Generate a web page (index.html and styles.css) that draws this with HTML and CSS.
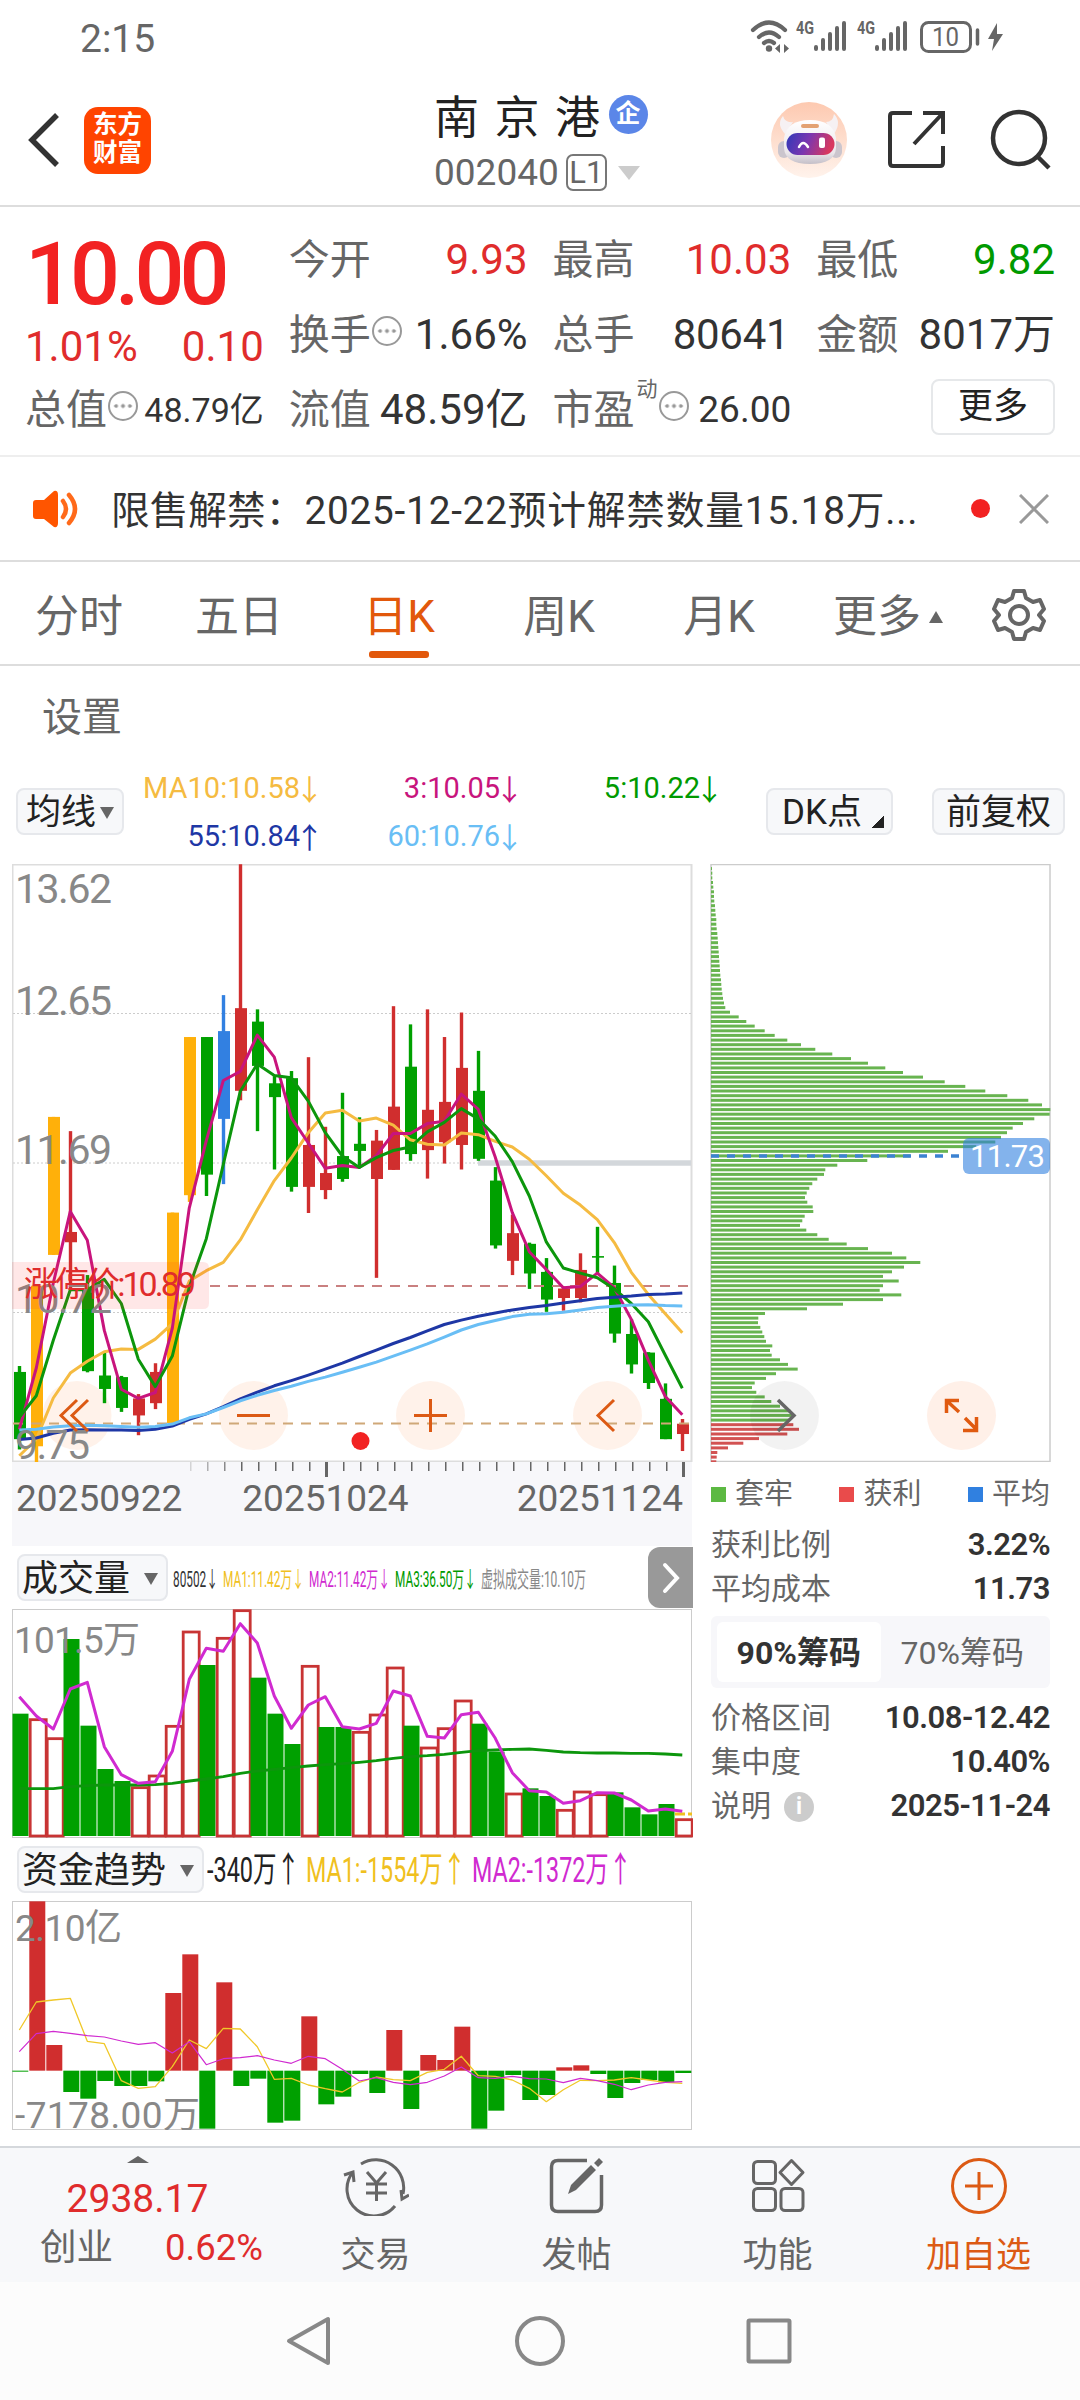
FILE: index.html
```html
<!DOCTYPE html>
<html lang="zh-CN">
<head>
  <meta charset="utf-8">
  <title>南京港 002040</title>
  <link rel="stylesheet" href="styles.css">
</head>
<body>
  <div class="statusbar">
    <span class="clock">2:15</span>
    <svg class="status-icons" width="260" height="40" viewBox="748 16 260 40">
      <g fill="none" stroke="#666" stroke-width="4.2" stroke-linecap="round">
        <path d="M753 30 Q769 15 785 30"/>
        <path d="M759 37 Q769 28 779 37"/>
        <path d="M764 43 Q769 39 774 43"/>
      </g>
      <circle cx="769" cy="48.500" r="3.200" fill="#666"/>
      <path d="M780 44v9l-5-4.500zM784 44v9l5-4.500z" fill="#666"/>
      <text class="net" x="796" y="34" textLength="18" lengthAdjust="spacingAndGlyphs">4G</text>
      <text class="net" x="857" y="34" textLength="18" lengthAdjust="spacingAndGlyphs">4G</text>
      <g stroke="#666" stroke-width="4" stroke-linecap="round">
        <path d="M816 47v2M823 40v9M830 34v15M837 28v21M844 23v26"/>
        <path d="M877 47v2M884 40v9M891 34v15M898 28v21M905 23v26"/>
      </g>
      <rect x="921.500" y="22.500" width="49" height="29" rx="7" fill="none" stroke="#666" stroke-width="3"/>
      <text class="batt" x="932" y="46" textLength="27" lengthAdjust="spacingAndGlyphs">10</text>
      <path d="M977.500 30v14" stroke="#666" stroke-width="3.500" stroke-linecap="round"/>
      <path d="M997 23l-9 16h6l-2 12 11-17h-6z" fill="#666"/>
    </svg>
  </div>

  <div class="header">
    <svg width="34" height="58" viewBox="0 0 34 58"><path d="M31 4L6 29L31 54" fill="none" stroke="#333" stroke-width="5.500"/></svg>
    <div class="logo">东方<br>财富</div>
    <div class="stock">
      <div class="stock-name">南京港<span class="corp">企</span></div>
      <div class="stock-code">002040<span class="level">L1</span><i class="tri-down"></i></div>
    </div>
    <svg class="bot" width="76" height="76" viewBox="0 0 76 76">
      <defs>
        <linearGradient id="peach" x1="0" y1="0" x2="0" y2="1"><stop offset="0" stop-color="#fdc9b0"/><stop offset="1" stop-color="#fff3ec"/></linearGradient>
        <linearGradient id="visor" x1="0" y1="0" x2="1" y2=".2"><stop offset="0" stop-color="#2f39b8"/><stop offset=".5" stop-color="#7b37b0"/><stop offset="1" stop-color="#d8385f"/></linearGradient>
        <linearGradient id="shell" x1="0" y1="0" x2="0" y2="1"><stop offset="0" stop-color="#fff"/><stop offset=".75" stop-color="#ebe6ea"/><stop offset="1" stop-color="#c4bfc8"/></linearGradient>
      </defs>
      <circle cx="38" cy="38" r="38" fill="url(#peach)"/>
      <path d="M22 20Q14 21 12 14Q5 22 14 32ZM55 20Q62 20 63 12Q71 20 63 32Z" fill="#f6f1f3"/>
      <rect x="7" y="39" width="12" height="17" rx="6" fill="#cbc5cd"/>
      <rect x="59" y="39" width="12" height="17" rx="6" fill="#cbc5cd"/>
      <path d="M13 36Q16 18 39 18T65 36V46Q64 62 39 62T13 46Z" fill="url(#shell)"/>
      <rect x="15.500" y="31" width="48" height="22" rx="11" fill="url(#visor)"/>
      <path d="M28 45Q32 37 37 45" fill="none" stroke="#fff" stroke-width="2.500" stroke-linecap="round"/>
      <rect x="48" y="35.500" width="6" height="10.500" rx="2" fill="#fff"/>
      <rect x="30" y="22" width="18" height="4" rx="2" fill="#e3a273"/>
    </svg>
    <svg class="share" width="60" height="60" viewBox="0 0 60 60" fill="none" stroke="#333" stroke-width="4">
      <path d="M25 3H6Q3 3 3 6V53Q3 56 6 56H53Q56 56 56 53V36"/><path d="M36 3H56V24M56 3L27 34"/>
    </svg>
    <svg width="62" height="62" viewBox="0 0 62 62" fill="none" stroke="#333" stroke-width="4.500"><circle cx="29" cy="29" r="26"/><path d="M47 47L59 59"/></svg>
  </div>

  <div class="quote">
    <div class="price-box">
      <div class="price">10.00</div>
      <div class="change"><span>1.01%</span><span>0.10</span></div>
    </div>
    <div class="cell"><label>今开</label><b class="red">9.93</b></div>
    <div class="cell"><label>最高</label><b class="red">10.03</b></div>
    <div class="cell"><label>最低</label><b class="green">9.82</b></div>
    <div class="cell"><label>换手<i class="more-dot"></i></label><b>1.66%</b></div>
    <div class="cell"><label>总手</label><b class="pad">80641</b></div>
    <div class="cell"><label>金额</label><b>8017万</b></div>
    <div class="cell"><label>总值<i class="more-dot"></i></label><b class="small">48.79亿</b></div>
    <div class="cell"><label>流值</label><b>48.59亿</b></div>
    <div class="cell"><label>市盈<sup>动</sup><i class="more-dot"></i></label><b class="mid">26.00</b></div>
    <div class="cell end"><button class="more-btn">更多</button></div>
  </div>

  <div class="notice">
    <svg width="46" height="38" viewBox="0 0 46 38">
      <path d="M3 10H11L21 1Q25 0 25 5V33Q25 38 21 37L11 29H3Q0 29 0 26V13Q0 10 3 10Z" fill="#ff5500"/>
      <path d="M30 11Q36 19 30 27M36 5Q48 19 36 33" fill="none" stroke="#ff6a1a" stroke-width="4.500" stroke-linecap="round"/>
    </svg>
    <span class="notice-text">限售解禁：<span class="notice-body">2025-12-22预计解禁数量15.18万...</span></span>
    <i class="red-dot"></i>
    <svg width="30" height="30" viewBox="0 0 30 30"><path d="M1 1L29 29M29 1L1 29" stroke="#999" stroke-width="3"/></svg>
  </div>

  <div class="tabs">
    <span>分时</span>
    <span>五日</span>
    <span class="active">日K</span>
    <span>周K</span>
    <span>月K</span>
    <span class="more-tab">更多<i class="tri-up"></i></span>
    <svg width="54" height="54" viewBox="0 0 54 54" fill="none" stroke="#666" stroke-width="4" stroke-linejoin="round">
      <path d="M22 3H32L34 10L41 14L48 12L52 21L47 27L52 33L48 42L41 40L34 44L32 51H22L20 44L13 40L6 42L2 33L7 27L2 21L6 12L13 14L20 10Z"/>
      <circle cx="27" cy="27" r="9"/>
    </svg>
  </div>

  <div class="subtab">设置</div>

  <div class="indicators">
    <button class="pill">均线<i class="tri-down dark"></i></button>
    <div class="ma-grid">
      <span class="c-yellow">MA10:10.58<em>↓</em></span><span class="c-pink">3:10.05<em>↓</em></span><span class="c-green">5:10.22<em>↓</em></span>
      <span class="c-blue">55:10.84<em>↑</em></span><span class="c-sky">60:10.76<em>↓</em></span>
    </div>
    <button class="pill dk">DK点</button>
    <button class="pill fq">前复权</button>
  </div>

  <div class="main">
    <div class="left">
      <svg id="kline" width="681" height="598" viewBox="12 864 681 598">
        <rect x="12.500" y="864.500" width="679" height="597" fill="#fff" stroke="#ddd" stroke-width="2"/>
        <path d="M13 1013.500H691M13 1163H691M13 1312.500H691" stroke="#ccc" stroke-dasharray="2 2"/>
        <path d="M478 1163H691" stroke="#d3d7db" stroke-width="5.500"/>
        <g fill="#ff6a1a" fill-opacity=".09">
          <circle cx="77" cy="1415.500" r="34.500"/><circle cx="253.500" cy="1415.500" r="34.500"/><circle cx="430.500" cy="1415.500" r="34.500"/><circle cx="607.500" cy="1415.500" r="34.500"/>
        </g>
        <g id="candles"></g>
        <path d="M210 1286H691" stroke="#c98080" stroke-width="2" stroke-dasharray="10 8"/>
        <path d="M13 1423.500H691" stroke="#cfa878" stroke-width="2" stroke-dasharray="10 8"/>
        <g id="averages"></g>
        <g class="axis-label">
          <text x="15" y="903" textLength="97">13.62</text>
          <text x="15" y="1015" textLength="97">12.65</text>
          <text x="15" y="1164" textLength="97">11.69</text>
          <text x="15" y="1313" textLength="97">10.72</text>
          <text x="15" y="1459" textLength="75">9.75</text>
        </g>
        <path d="M12 1262H203Q209 1262 209 1268V1303Q209 1309 203 1309H12Z" fill="#f22" fill-opacity=".11"/>
        <text class="limit" x="24" y="1296" textLength="172">涨停价:10.89</text>
        <g fill="none" stroke="#dc5a14" stroke-width="3">
          <path d="M77 1400L61 1415.500L77 1431M88 1400L72 1415.500L88 1431"/>
          <path d="M237 1415.500H270M414 1415.500H447M430.500 1399V1432"/>
          <path d="M614 1400L598 1415.500L614 1431"/>
        </g>
        <circle cx="360.500" cy="1441" r="9" fill="#f22222"/>
      </svg>

      <div class="timeline">
        <svg id="ticks" width="681" height="16" viewBox="12 1462 681 16"></svg>
        <div class="dates"><span>20250922</span><span class="mid-date">20251024</span><span>20251124</span></div>
      </div>

      <div class="chart-head">
        <button class="pill">成交量<i class="tri-down dark"></i></button>
        <svg width="476" height="60" viewBox="172 1548 476 60" font-size="22">
          <text x="172" y="1587" fill="#333" textLength="45" lengthAdjust="spacingAndGlyphs">80502↓</text>
          <text x="222" y="1587" fill="#f0c020" textLength="81" lengthAdjust="spacingAndGlyphs">MA1:11.42万↓</text>
          <text x="308" y="1587" fill="#d02ad0" textLength="81" lengthAdjust="spacingAndGlyphs">MA2:11.42万↓</text>
          <text x="394" y="1587" fill="#009a00" textLength="81" lengthAdjust="spacingAndGlyphs">MA3:36.50万↓</text>
          <text x="480" y="1587" fill="#888" textLength="105" lengthAdjust="spacingAndGlyphs">虚拟成交量:10.10万</text>
        </svg>
        <div class="handle"><svg width="20" height="32" viewBox="0 0 20 32"><path d="M4 3L16 16L4 29" fill="none" stroke="#fff" stroke-width="4" stroke-linecap="round"/></svg></div>
      </div>

      <svg id="volume" width="681" height="229" viewBox="12 1609 681 229">
        <rect x="12.500" y="1609.500" width="679" height="228" fill="#fff" stroke="#ccc"/>
        <g id="volume-bars"></g>
        <text class="axis-label" x="14" y="1653" font-size="37" textLength="126">101.5万</text>
        <g id="volume-lines"></g>
      </svg>

      <div class="chart-head fund">
        <button class="pill">资金趋势<i class="tri-down dark"></i></button>
        <svg width="476" height="60" viewBox="207 1840 476 60" font-size="35">
          <text x="207" y="1882" fill="#222" textLength="93" lengthAdjust="spacingAndGlyphs">-340万↑</text>
          <text x="306" y="1882" fill="#f0c020" textLength="160" lengthAdjust="spacingAndGlyphs">MA1:-1554万↑</text>
          <text x="472" y="1882" fill="#d02ad0" textLength="160" lengthAdjust="spacingAndGlyphs">MA2:-1372万↑</text>
        </svg>
      </div>

      <svg id="fund" width="681" height="229" viewBox="12 1901 681 229">
        <rect x="12.500" y="1901.500" width="679" height="228" fill="#fff" stroke="#ccc"/>
        <g id="fund-bars"></g>
        <g class="axis-label" font-size="37">
          <text x="15" y="1941" textLength="107">2.10亿</text>
          <text x="15" y="2128" textLength="185">-7178.00万</text>
        </g>
        <g id="fund-lines"></g>
      </svg>
    </div>

    <div class="right">
      <svg id="chips" width="341" height="598" viewBox="710 864 341 598">
        <rect x="711" y="864.500" width="339" height="597" fill="#fff" stroke="#ccc" stroke-width="1.500"/>
        <g id="chip-bars"></g>
        <path d="M711 1156H963" stroke="#3c82d2" stroke-width="3.500" stroke-dasharray="8 8"/>
        <rect x="963" y="1138" width="87" height="36" rx="6" fill="#3080e0" fill-opacity=".6"/>
        <text x="970" y="1167" font-size="31" fill="#fff" textLength="75">11.73</text>
        <circle cx="784.500" cy="1415.500" r="34.500" fill="#000" fill-opacity=".05"/>
        <path d="M778 1400L794 1415.500L778 1431" fill="none" stroke="#666" stroke-width="3.500"/>
        <circle cx="961.500" cy="1415.500" r="34.500" fill="#fff0e8"/>
        <path d="M959 1400.500H946.500V1413M947 1401L959 1412M965 1418L977 1430M963 1430.500H976.500V1417" fill="none" stroke="#e05a10" stroke-width="3.500"/>
      </svg>
      <div class="chip-legend">
        <span><i class="sq g"></i>套牢</span><span><i class="sq r"></i>获利</span><span><i class="sq b"></i>平均</span>
      </div>
      <div class="info"><span>获利比例</span><b>3.22%</b></div>
      <div class="info"><span>平均成本</span><b>11.73</b></div>
      <div class="segment"><span class="on">90%筹码</span><span>70%筹码</span></div>
      <div class="info"><span>价格区间</span><b>10.08-12.42</b></div>
      <div class="info"><span>集中度</span><b>10.40%</b></div>
      <div class="info"><span>说明<i class="tip">i</i></span><b>2025-11-24</b></div>
    </div>
  </div>

  <div class="bottombar">
    <div class="index">
      <i class="tri-up wide"></i>
      <div class="index-value">2938.17</div>
      <div class="index-row"><span>创业</span><span class="red">0.62%</span></div>
    </div>
    <div class="action">
      <svg width="66" height="60" viewBox="342 2156 66 60" fill="none" stroke="#666" stroke-width="3">
        <path d="M360 2164A28 28 0 0 1 402 2194M394 2206A27 27 0 0 1 352 2172"/>
        <path d="M343 2175L352 2172L353 2182M400 2190L401 2199L408 2195"/>
        <path d="M366 2172L375.500 2183L385 2172M375.500 2183V2201M365 2184H386M365 2193H386"/>
      </svg>
      <span>交易</span>
    </div>
    <div class="action">
      <svg width="60" height="60" viewBox="548 2156 60 60" fill="none" stroke="#666" stroke-width="3.500">
        <path d="M588 2160.500H559Q552.500 2160.500 552.500 2167V2205Q552.500 2211.500 559 2211.500H596Q602.500 2211.500 602.500 2205V2175"/>
        <path d="M569 2194L572 2185L592 2165L597 2170L577 2190ZM595 2163L600 2158L604 2162L599 2167Z" fill="#666" stroke="none"/>
      </svg>
      <span>发帖</span>
    </div>
    <div class="action">
      <svg width="60" height="60" viewBox="748 2156 60 60" fill="none" stroke="#666" stroke-width="3">
        <rect x="753.500" y="2161.500" width="22" height="22" rx="4"/>
        <rect x="753.500" y="2188.500" width="22" height="22" rx="4"/>
        <rect x="781" y="2188.500" width="22" height="22" rx="4"/>
        <path d="M791.500 2160.500L803 2172.500L791.500 2184.500L780 2172.500Z" stroke-linejoin="round"/>
      </svg>
      <span>功能</span>
    </div>
    <div class="action orange">
      <svg width="60" height="60" viewBox="0 0 60 60" fill="none" stroke="#dc5a14" stroke-width="3"><circle cx="30" cy="30" r="26.500"/><path d="M16 30H44M30 16V44"/></svg>
      <span>加自选</span>
    </div>
  </div>

  <div class="navbar">
    <svg width="520" height="56" viewBox="280 2313 520 56" fill="none" stroke="#888" stroke-width="4" stroke-linejoin="round">
      <path d="M328 2319V2363L289 2341Z"/>
      <circle cx="540" cy="2341" r="23"/>
      <rect x="748.500" y="2320.500" width="41" height="41" rx="1"/>
    </svg>
  </div>

  <script src="charts.js"></script>
</body>
</html>
```

FILE: styles.css
```css
* {
  box-sizing: border-box;
}

body {
  margin: 0;
  width: 1080px;
  height: 2400px;
  overflow: hidden;
  background: #fff;
  color: #333;
  font-family: Roboto, "Noto Sans CJK SC", sans-serif;
}

svg {
  display: block;
  flex: none;
}

i, em {
  font-style: normal;
}

button {
  font-family: inherit;
  color: #222;
  padding: 0;
}

.red { color: #e02c2c !important; }
.green { color: #009a00 !important; }
.c-yellow { color: #f5bb41; }
.c-pink { color: #c8147d; }
.c-green { color: #009a00; }
.c-blue { color: #1e37a5; }
.c-sky { color: #69bef5; }

.tri-down, .tri-up {
  display: inline-block;
  width: 0;
  height: 0;
  border: 7px solid transparent;
}
.tri-down {
  border-width: 14px 11px 0;
  border-top-color: #ccc;
}
.tri-down.dark {
  border-width: 12px 7px 0;
  border-top-color: #666;
}
.tri-up {
  border-width: 0 7px 12px;
  border-bottom-color: #666;
}
.tri-up.wide {
  border-width: 0 11px 7px;
}

/* status bar */
.statusbar {
  display: flex;
  justify-content: space-between;
  height: 75px;
  padding: 16px 72px 0 80px;
}
.clock {
  font-size: 39px;
  line-height: 46px;
  color: #666;
}
.net {
  font-size: 19px;
  font-weight: 700;
  fill: #666;
}
.batt {
  font-size: 25px;
  fill: #666;
}

/* header */
.header {
  display: flex;
  align-items: center;
  height: 132px;
  padding: 0 27px 0 26px;
  border-bottom: 2px solid #ddd;
}
.logo {
  width: 67px;
  height: 67px;
  margin-left: 24px;
  padding-top: 4px;
  border-radius: 14px;
  background: #ff4400;
  color: #fff;
  font-size: 24.500px;
  font-weight: 700;
  line-height: 28px;
  text-align: center;
}
.stock {
  margin-left: 283px;
  width: 337px;
}
.stock-name {
  display: flex;
  align-items: center;
  height: 63px;
  font-size: 45px;
  letter-spacing: 15.500px;
  color: #222;
}
.corp {
  width: 39px;
  height: 39px;
  margin-left: -7px;
  border-radius: 50%;
  background: #5b86e8;
  color: #fff;
  font-size: 25px;
  font-weight: 700;
  line-height: 37px;
  letter-spacing: 0;
  text-align: center;
}
.stock-code {
  display: flex;
  align-items: center;
  height: 51px;
  padding-top: 2px;
  font-size: 37px;
  color: #666;
}
.level {
  width: 41px;
  height: 37px;
  margin: 0 11px 0 7px;
  border: 2px solid #777;
  border-radius: 7px;
  font-size: 31px;
  line-height: 34px;
  text-align: center;
}
.share {
  margin: 0 43px 0 40px;
}

/* quote */
.quote {
  display: grid;
  grid-template-columns: repeat(4, 1fr);
  grid-auto-rows: 75px;
  column-gap: 25px;
  height: 250px;
  padding: 15px 25px 0 25px;
  border-bottom: 2px solid #eee;
}
.price-box {
  grid-row: span 2;
}
.price {
  height: 96px;
  font-size: 88px;
  font-weight: 500;
  line-height: 104px;
  letter-spacing: -5px;
  color: #f22222;
}
.change {
  display: flex;
  justify-content: space-between;
  font-size: 42px;
  line-height: 58px;
  color: #e02c2c;
}
.cell {
  display: flex;
  align-items: center;
  justify-content: space-between;
  line-height: 60px;
  white-space: nowrap;
}
.cell label {
  display: flex;
  align-items: center;
  font-size: 41px;
  color: #666;
}
.cell b {
  font-size: 42px;
  font-weight: 400;
  color: #333;
}
.cell b.pad {
  padding-right: 2px;
  letter-spacing: -.3px;
}
.cell b.small {
  font-size: 34px;
}
.cell b.mid {
  font-size: 37px;
}
.cell sup {
  align-self: flex-start;
  margin-top: -10px;
  padding-left: 2px;
  font-size: 21px;
  line-height: 38px;
}
.cell.end {
  justify-content: flex-end;
}
.more-dot {
  width: 30px;
  height: 30px;
  margin: -8px 0 0 1px;
  border: 2px solid #999;
  border-radius: 50%;
  background: radial-gradient(circle, #999 1.800px, transparent 2.300px) center / 7px 7px;
  background-clip: content-box;
  padding: 10px 3px;
}
.more-btn {
  width: 124px;
  height: 56px;
  margin-top: -5px;
  border: 2px solid #e6e8ea;
  border-radius: 8px;
  background: #fff;
  font-size: 35px;
  line-height: 46px;
}

/* notice */
.notice {
  display: flex;
  align-items: center;
  height: 105px;
  padding: 0 31px 0 33px;
  border-bottom: 2px solid #ddd;
}
.notice-text {
  flex: 1;
  padding-left: 32px;
  margin-top: -3px;
  font-size: 38.700px;
  white-space: nowrap;
}
.notice-body {
  letter-spacing: .8px;
}
.red-dot {
  width: 19px;
  height: 19px;
  margin-right: 29px;
  border-radius: 50%;
  background: #f22222;
}

/* tabs */
.tabs {
  display: grid;
  grid-template-columns: repeat(6, 160px) 120px;
  align-items: center;
  height: 104px;
  border-bottom: 2px solid #ddd;
  font-size: 44px;
  color: #666;
  text-align: center;
}
.tabs span {
  position: relative;
  left: -1px;
  line-height: 100px;
  padding-top: 5px;
}
.tabs svg {
  margin-left: 32px;
}
.tabs .active {
  color: #e2580b;
}
.tabs .active::after {
  content: "";
  position: absolute;
  left: 50px;
  bottom: 9px;
  width: 60px;
  height: 7px;
  border-radius: 3px;
  background: #e2580b;
}
.tabs .more-tab {
  left: 8px;
  white-space: nowrap;
}
.tabs .tri-up {
  margin: 0 0 9px 8px;
}
.subtab {
  height: 122px;
  padding: 22px 42px;
  font-size: 40px;
  line-height: 60px;
  color: #666;
}

/* indicators */
.indicators {
  display: flex;
  height: 76px;
  padding: 0 16px;
  align-items: flex-start;
}
.pill {
  flex: none;
  display: flex;
  align-items: center;
  justify-content: center;
  gap: 4px;
  height: 47px;
  padding-top: 3px;
  border: 2px solid #e6e8ec;
  border-radius: 8px;
  background: #f7f8fa;
  font-size: 35px;
  line-height: 40px;
}
.indicators .pill {
  width: 108px;
}
.indicators .dk {
  width: 127px;
  margin-left: 47px;
  padding-right: 15px;
  background: linear-gradient(135deg, transparent 50%, #222 50%) no-repeat right 7px bottom 5px / 12px 12px, #f7f8fa;
}
.indicators .fq {
  width: 133px;
  margin-left: 39px;
}
.ma-grid {
  display: grid;
  grid-template-columns: 195px 200px 200px;
  row-gap: 12px;
  margin-top: -18px;
  font-size: 29px;
  line-height: 36px;
  text-align: right;
  white-space: nowrap;
}
.ma-grid span {
  display: flex;
  justify-content: flex-end;
  height: 36px;
}
.ma-grid em {
  width: 19px;
  font-family: "Noto Sans CJK SC", sans-serif;
  font-size: 29px;
  text-indent: -5px;
}

/* charts */
.main {
  display: flex;
  height: 1282px;
  padding-left: 12px;
}
.left {
  width: 681px;
}
.right {
  width: 341px;
  margin-left: 17px;
}
.axis-label {
  fill: #888;
}
#kline .axis-label {
  font-size: 41px;
}
.limit {
  font-size: 34px;
  fill: #e02c2c;
}
.timeline {
  height: 84px;
  width: 680px;
  background: #f7f7fa;
}
.dates {
  display: flex;
  justify-content: space-between;
  padding: 0 9px 0 4px;
  font-size: 37px;
  line-height: 42px;
  color: #666;
}
.mid-date {
  margin-left: -48px;
}
.chart-head {
  display: flex;
  align-items: center;
  gap: 5px;
  height: 63px;
}
.chart-head .pill {
  width: 151px;
  margin-left: 5px;
  padding-right: 5px;
  gap: 14px;
  font-size: 36px;
}
.chart-head.fund .pill {
  width: 187px;
}
.chart-head.fund {
  gap: 3px;
}
.handle {
  display: flex;
  align-items: center;
  justify-content: center;
  flex: none;
  width: 45px;
  height: 61px;
  margin-left: -6px;
  border-radius: 12px 0 0 12px;
  background: #999;
}

/* chip panel */
.chip-legend {
  display: flex;
  justify-content: space-between;
  height: 62px;
  padding: 0 1px;
  font-size: 29px;
  line-height: 60px;
  color: #666;
}
.chip-legend span {
  display: flex;
  align-items: center;
  gap: 9px;
  padding-top: 2px;
}
.sq {
  width: 15px;
  height: 15px;
}
.sq.g { background: #5cb942; }
.sq.r { background: #e94b4b; }
.sq.b { background: #3080e0; }

.info {
  display: flex;
  justify-content: space-between;
  height: 44px;
  padding: 1px 1px 0;
  font-size: 30px;
  line-height: 40px;
  color: #666;
}
.info b {
  font-size: 31px;
  font-weight: 600;
  letter-spacing: -.5px;
  color: #333;
}
.segment {
  display: flex;
  align-items: center;
  height: 72px;
  margin: 4px 1px 9px;
  padding: 6px;
  border-radius: 6px;
  background: #f7f7fa;
  font-size: 32px;
  color: #666;
  white-space: nowrap;
}
.segment span {
  flex: 1;
  height: 60px;
  line-height: 62px;
  border-radius: 6px;
  text-align: center;
}
.segment .on {
  background: #fff;
  color: #333;
  font-weight: 700;
}
.tip {
  display: inline-block;
  width: 30px;
  height: 30px;
  margin-left: 13px;
  border-radius: 50%;
  background: #ccc;
  color: #fff;
  font-size: 23px;
  font-weight: 700;
  line-height: 30px;
  text-align: center;
  vertical-align: 2px;
}

/* bottom bar */
.bottombar {
  display: flex;
  height: 136px;
  border-top: 2px solid #d5d8dc;
  background: #f7f8fa;
}
.index {
  display: flex;
  flex-direction: column;
  align-items: center;
  width: 275px;
  padding-top: 8px;
}
.index-value {
  margin-top: 12px;
  font-size: 39px;
  line-height: 48px;
  color: #e02c2c;
}
.index-row {
  display: flex;
  justify-content: space-between;
  width: 275px;
  margin-top: -1px;
  padding: 0 12px 0 40px;
  font-size: 36.500px;
  line-height: 52px;
  color: #666;
}
.action {
  display: flex;
  flex-direction: column;
  align-items: center;
  width: 201px;
  padding-top: 8px;
  font-size: 35px;
  line-height: 70px;
  color: #666;
}
.action span {
  height: 60px;
  margin-top: 5px;
}
.action.orange {
  color: #dc5a14;
}
.navbar {
  display: flex;
  justify-content: center;
  height: 118px;
  padding-top: 31px;
  background: #fcfcfc;
}
```

FILE: charts.js
```js
var SVG = 'http://www.w3.org/2000/svg';
var STEP = 17;
var RED = '#d02e2e';
var GREEN = '#00a000';
var colors = { r: RED, g: GREEN, y: '#ffb00a', b: '#3280e1' };

function add(parent, tag, attrs) {
  var el = document.createElementNS(SVG, tag);
  Object.keys(attrs).forEach(function (key) {
    el.setAttribute(key, attrs[key]);
  });
  document.getElementById(parent).appendChild(el);
}

function line(parent, values, scale, color, width) {
  var points = values.map(function (v, i) {
    return (19.3 + i * STEP) + ',' + scale(v).toFixed(1);
  });
  add(parent, 'polyline', { points: points.join(' '), fill: 'none', stroke: color, 'stroke-width': width, 'stroke-linejoin': 'round' });
}

// each chart keeps its own vertical unit
function kY(v) { return 850 + v / 2.529; }
function volY(v) { return 1600 + v / 3; }
function fundY(v) { return 1840 + v / 3; }

// color, high, body top, body bottom, low
var candles = [
  ['g', 1305, 1320, 1490, 1516], ['y', 1102, 1102, 1508, 1548], ['y', 675, 675, 1024, 1024], ['r', 711, 966, 992, 1110],
  ['g', 1075, 1110, 1318, 1321], ['g', 1272, 1329, 1363, 1399], ['g', 1330, 1333, 1411, 1421], ['r', 1376, 1387, 1430, 1480],
  ['r', 1298, 1320, 1399, 1414], ['y', 917, 917, 1449, 1449], ['y', 473, 473, 873, 890], ['g', 473, 473, 821, 875],
  ['b', 367, 458, 680, 845], ['r', 36, 400, 609, 633], ['g', 403, 434, 546, 711], ['g', 572, 590, 625, 808],
  ['g', 559, 577, 852, 864], ['r', 524, 746, 852, 918], ['r', 700, 817, 860, 883], ['g', 614, 774, 832, 839],
  ['g', 676, 743, 761, 803], ['r', 708, 735, 832, 1082], ['r', 395, 649, 809, 809], ['g', 441, 548, 769, 786],
  ['r', 403, 657, 759, 831], ['r', 473, 637, 739, 793], ['r', 411, 551, 746, 808], ['g', 508, 609, 781, 786],
  ['g', 802, 836, 1000, 1008], ['r', 922, 969, 1039, 1075], ['g', 993, 996, 1071, 1110], ['g', 1032, 1067, 1137, 1168],
  ['r', 1104, 1109, 1133, 1165], ['r', 1020, 1062, 1133, 1144], ['g', 953, 1027, 1031, 1070], ['g', 1051, 1095, 1223, 1246],
  ['g', 1187, 1224, 1301, 1324], ['g', 1270, 1271, 1348, 1363], ['g', 1349, 1388, 1490, 1490], ['r', 1439, 1451, 1477, 1520]
];
candles.forEach(function (c, i) {
  var x = 19.3 + i * STEP;
  add('candles', 'rect', { x: x - 1.5, y: kY(c[1]), width: 3.4, height: (c[4] - c[1]) / 2.529, fill: colors[c[0]] });
  add('candles', 'rect', { x: x - 5.3, y: kY(c[2]), width: 12, height: (c[3] - c[2]) / 2.529, fill: colors[c[0]] });
});

var ma10 = [1532, 1490, 1386, 1323, 1293, 1269, 1262, 1263, 1237, 1198, 1090, 1064, 1043, 986, 910, 836, 779, 715, 665, 658, 685, 678, 696, 733, 744, 746, 716, 720, 737, 751, 782, 824, 868, 898, 935, 993, 1068, 1124, 1173, 1221];
var ma3 = [1465, 1310, 1095, 914, 987, 1215, 1364, 1387, 1372, 1210, 905, 735, 583, 560, 468, 524, 677, 741, 805, 798, 803, 773, 717, 717, 692, 686, 617, 656, 777, 917, 1016, 1061, 1107, 1104, 1070, 1107, 1187, 1290, 1382, 1428];
var ma5 = [1435, 1380, 1240, 1112, 1112, 1086, 1147, 1288, 1357, 1280, 1105, 983, 795, 610, 541, 570, 576, 635, 715, 774, 803, 778, 760, 751, 713, 689, 654, 680, 724, 788, 875, 991, 1057, 1070, 1082, 1110, 1147, 1193, 1278, 1361];
var ma55 = [1491, 1487, 1475, 1467, 1466, 1467, 1467, 1468, 1465, 1457, 1440, 1426, 1408, 1388, 1371, 1355, 1342, 1328, 1313, 1298, 1281, 1265, 1248, 1233, 1216, 1200, 1189, 1179, 1171, 1163, 1157, 1152, 1146, 1140, 1134, 1131, 1128, 1124, 1123, 1120];
var ma60 = [1467, 1465, 1459, 1456, 1455, 1456, 1458, 1460, 1458, 1452, 1436, 1426, 1410, 1393, 1379, 1367, 1356, 1344, 1333, 1321, 1308, 1295, 1280, 1265, 1249, 1232, 1214, 1200, 1190, 1180, 1174, 1173, 1169, 1163, 1157, 1154, 1151, 1150, 1152, 1153];
line('averages', ma10, kY, '#f5bb41', 3);
line('averages', ma3, kY, '#c8147d', 3);
line('averages', ma5, kY, '#0c960c', 3);
line('averages', ma55, kY, '#1e37a5', 3);
line('averages', ma60, kY, '#69bef5', 3);

// date ruler, the left ones fade in
for (var t = 10; t < 40; t++) {
  var major = t === 18 || t === 39;
  add('ticks', 'rect', {
    x: 20 + t * STEP - (major ? 1 : 0), y: 1462, width: major ? 3 : 1.5, height: major ? 15 : 9,
    fill: '#666', opacity: t < 13 ? (t - 9) * 0.25 : 1
  });
}

var volumes = [
  ['g', 341], ['r', 356], ['r', 413], ['g', 117], ['g', 377], ['g', 507], ['g', 543], ['r', 560], ['r', 525], ['r', 376],
  ['r', 93], ['g', 195], ['r', 112], ['r', 29], ['g', 233], ['g', 341], ['g', 432], ['r', 196], ['g', 381], ['g', 381],
  ['r', 394], ['r', 342], ['r', 201], ['g', 377], ['r', 441], ['r', 383], ['r', 300], ['g', 371], ['g', 455], ['r', 579],
  ['g', 565], ['g', 588], ['r', 628], ['r', 573], ['r', 581], ['g', 577], ['g', 622], ['g', 643], ['g', 612], ['r', 656]
];
volumes.forEach(function (v, i) {
  var x = 12.5 + i * STEP;
  var y = volY(v[1]);
  if (v[0] === 'g') {
    add('volume-bars', 'rect', { x: x, y: y, width: 16, height: 1836 - y, fill: GREEN });
  } else {
    add('volume-bars', 'rect', { x: x + 0.7, y: y + 1, width: 16, height: 1835 - y, fill: '#fff', stroke: '#c83434', 'stroke-width': 2.8 });
  }
});
add('volume-bars', 'path', { d: 'M675 1814H692', stroke: '#f0c020', 'stroke-width': 3, 'stroke-dasharray': '10 3' });

var vol5 = [290, 348, 387, 267, 247, 440, 524, 550, 545, 454, 238, 145, 154, 71, 129, 288, 385, 315, 290, 380, 387, 370, 273, 288, 409, 414, 344, 337, 415, 518, 572, 576, 610, 602, 578, 579, 600, 633, 627, 634];
var vol60 = [566, 566, 566, 560, 557, 555, 555, 555, 554, 550, 543, 537, 530, 520, 513, 508, 503, 498, 494, 491, 487, 482, 475, 470, 467, 463, 457, 452, 450, 448, 447, 451, 456, 458, 459, 459, 460, 460, 462, 465];
line('volume-lines', vol60, volY, '#0c960c', 2.8);
line('volume-lines', vol5, volY, '#d02ad0', 3);

var funds = [695, 184, 615, 756, 776, 723, 738, 738, 724, 459, 343, 866, 427, 738, 716, 848, 842, 529, 793, 770, 702, 759, 570, 807, 645, 660, 560, 866, 812, 705, 780, 765, 682, 676, 702, 774, 729, 720, 727, 699];
var zero = 692;
funds.forEach(function (v, i) {
  add('fund-bars', 'rect', {
    x: 12.3 + i * STEP, y: fundY(Math.min(v, zero)), width: 16, height: Math.abs(v - zero) / 3,
    fill: v < zero ? RED : GREEN
  });
});

var fundFast = [570, 486, 480, 475, 604, 611, 722, 745, 740, 680, 600, 626, 565, 567, 620, 718, 715, 735, 746, 756, 727, 711, 719, 722, 697, 688, 649, 707, 709, 720, 745, 785, 749, 721, 722, 720, 713, 720, 727, 730];
var fundSlow = [635, 581, 574, 580, 587, 591, 603, 613, 608, 639, 605, 674, 656, 653, 647, 660, 670, 649, 656, 688, 723, 713, 727, 734, 727, 708, 681, 713, 715, 709, 716, 717, 728, 715, 722, 733, 749, 735, 727, 725];
line('fund-lines', fundFast, fundY, '#f0c828', 1.3);
line('fund-lines', fundSlow, fundY, '#d02ad0', 1.2);

// chip distribution, top price to bottom price
var chips = [
  65, 66, 66, 68, 69, 71, 71, 72, 74, 75, 76, 78, 78, 79, 81, 82, 83, 84, 85, 86, 87, 88, 89, 90, 92, 93, 94, 96, 98, 101, 105,
  119, 145, 168, 193, 223, 253, 291, 332, 375, 426, 482, 533, 585, 638, 698, 763, 825, 885, 951, 1014, 1055, 1080, 1078, 1032,
  998, 967, 950, 932, 915, 858, 773, 660, 531, 441, 405, 401, 381, 366, 357, 349, 344, 351, 367, 369, 343, 336, 329, 348, 381,
  415, 469, 533, 605, 648, 690, 641, 605, 578, 625, 578, 568, 633, 578, 458, 350, 224, 204, 203, 210, 216, 222, 227, 246, 239,
  244, 269, 293, 322, 257, 227, 193, 185, 198, 223, 243, 269, 300, 310, 297, 309, 326, 291, 206, 159, 113, 81, 79, 78
];
chips.forEach(function (w, i) {
  add('chip-bars', 'rect', {
    x: 711, y: (kY(47 + i * 11.72) - 1.5).toFixed(1), width: ((w - 62) / 3).toFixed(1), height: 3,
    fill: i >= chips.length - 9 ? '#d25252' : '#68b450'
  });
});
```
